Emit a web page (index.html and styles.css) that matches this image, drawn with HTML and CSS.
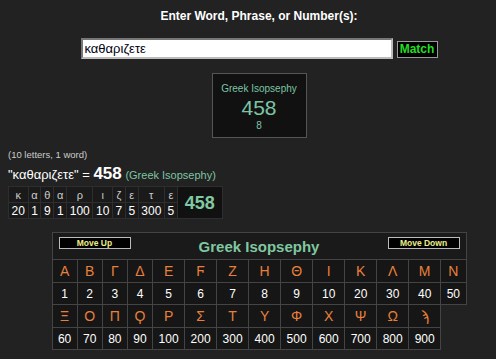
FILE: index.html
```html
<!DOCTYPE html>
<html lang="en">
<head>
    <meta charset="UTF-8">
    <meta name="viewport" content="width=device-width, initial-scale=1.0">
    <title>Gematria Calculator</title>
    <link rel="stylesheet" href="styles.css">
</head>
<body>
    <div class="top">
        <div class="prompt">Enter Word, Phrase, or Number(s):</div>
        <form class="search">
            <input class="word" type="text" value="καθαριζετε">
            <button class="match" type="button">Match</button>
        </form>
        <div class="summary">
            <div class="summary-name">Greek Isopsephy</div>
            <div class="summary-total">458</div>
            <div class="summary-sub">8</div>
        </div>
    </div>

    <div class="result">
        <div class="count">(10 letters, 1 word)</div>
        <div class="equation">"καθαριζετε" = <b>458</b> <span class="cipher">(Greek Isopsephy)</span></div>
        <table class="breakdown">
            <tr class="chars">
                <td>κ</td><td>α</td><td>θ</td><td>α</td><td>ρ</td><td>ι</td><td>ζ</td><td>ε</td><td>τ</td><td>ε</td>
                <td class="sum" rowspan="2">458</td>
            </tr>
            <tr class="nums">
                <td>20</td><td>1</td><td>9</td><td>1</td><td>100</td><td>10</td><td>7</td><td>5</td><td>300</td><td>5</td>
            </tr>
        </table>
    </div>

    <div class="chart-wrap">
        <table class="chart">
            <tr>
                <th colspan="14">
                    <div class="chart-head">
                        <button class="shift" type="button">Move Up</button>
                        <span class="chart-title">Greek Isopsephy</span>
                        <button class="shift" type="button">Move Down</button>
                    </div>
                </th>
            </tr>
            <tr class="letters">
                <td>Α</td><td>Β</td><td>Γ</td><td>Δ</td><td>Ε</td><td>Ϝ</td><td>Ζ</td><td>Η</td><td>Θ</td><td>Ι</td><td>Κ</td><td>Λ</td><td>Μ</td><td>Ν</td>
            </tr>
            <tr class="values">
                <td>1</td><td>2</td><td>3</td><td>4</td><td>5</td><td>6</td><td>7</td><td>8</td><td>9</td><td>10</td><td>20</td><td>30</td><td>40</td><td>50</td>
            </tr>
            <tr class="letters">
                <td>Ξ</td><td>Ο</td><td>Π</td><td>Ϙ</td><td>Ρ</td><td>Σ</td><td>Τ</td><td>Υ</td><td>Φ</td><td>Χ</td><td>Ψ</td><td>Ω</td><td>ϡ</td>
            </tr>
            <tr class="values">
                <td>60</td><td>70</td><td>80</td><td>90</td><td>100</td><td>200</td><td>300</td><td>400</td><td>500</td><td>600</td><td>700</td><td>800</td><td>900</td>
            </tr>
        </table>
    </div>
</body>
</html>
```

FILE: styles.css
```css
/* Page */
body {
    background-color: #222;
    color: #fff;
    font-family: "Liberation Sans", Arial, sans-serif;
    margin: 0;
}

/* Top block, centred a little right of the window */
.top {
    padding: 9px 0 0 22px;
    text-align: center;
}

.prompt {
    font-size: 12px;
    line-height: 14px;
    font-weight: bold;
}

.search {
    display: flex;
    justify-content: center;
    align-items: center;
    gap: 4px;
    margin: 15px 0 0;
}

.word {
    box-sizing: border-box;
    width: 312px;
    height: 21px;
    margin: 0;
    padding: 0 2px;
    border: 2px solid #777;
    border-right-color: #bbb;
    border-bottom-color: #bbb;
    background: #fff;
    color: #001;
    font-family: "Liberation Sans", Arial, sans-serif;
    font-size: 13px;
}

.match {
    box-sizing: border-box;
    width: 41px;
    height: 17px;
    margin: 1px 0 0;
    padding: 0;
    border: 1px solid #999;
    background: #000;
    color: #22dd22;
    font-family: "Liberation Sans", Arial, sans-serif;
    font-size: 12px;
    font-weight: bold;
}

.summary {
    box-sizing: border-box;
    width: 95px;
    height: 65px;
    margin: 14px auto 0;
    padding-top: 9px;
    border: 1px solid #555;
    background: #111;
    color: #7cc4a4;
}

.summary-name {
    font-size: 10px;
    line-height: 12px;
}

.summary-total {
    margin-top: 2px;
    font-size: 21px;
    line-height: 22px;
}

.summary-sub {
    margin-top: 1px;
    font-size: 10px;
    line-height: 12px;
}

/* Word result, left aligned */
.result {
    padding-left: 8px;
}

.count {
    margin-top: 11px;
    font-size: 9.5px;
    line-height: 11px;
    color: #ccc;
}

.equation {
    margin-top: 6px;
    font-size: 13px;
    line-height: 16px;
}

.equation b {
    font-size: 17px;
}

.cipher {
    font-size: 11px;
    color: #7cc4a4;
}

.breakdown {
    border-collapse: collapse;
    margin-top: 3px;
    font-size: 12px;
}

.breakdown td {
    height: 15px;
    padding: 0 2.6px;
    border: 1px solid #2e2e2e;
    background: #1a1a1a;
    text-align: center;
    line-height: 14px;
}

.breakdown .chars td {
    color: #ccc;
    font-size: 11px;
}

.breakdown .chars .sum {
    padding: 0 7px;
    background: #111;
    color: #80c8a0;
    font-size: 18px;
    font-weight: bold;
}

/* Cipher chart */
.chart-wrap {
    padding-left: 22px;
    margin-top: 13px;
}

.chart {
    width: 415px;
    border-collapse: collapse;
    margin: 0 auto;
}

.chart th {
    padding: 0;
    border: 1px solid #444;
    background: #1a1a1a;
}

.chart-head {
    display: flex;
    align-items: flex-start;
    height: 26px;
    padding: 4px 6px 0;
    box-sizing: border-box;
}

.chart-title {
    flex: 1;
    margin-top: 1px;
    color: #80c8a0;
    font-size: 15px;
    line-height: 18px;
    font-weight: bold;
}

.shift {
    box-sizing: border-box;
    width: 72px;
    height: 12px;
    margin: 0;
    padding: 0;
    border: 1px solid #bbb;
    background: #000;
    color: #eeee88;
    font-family: "Liberation Sans", Arial, sans-serif;
    font-size: 8.5px;
    font-weight: bold;
    line-height: 10px;
}

.chart td {
    padding: 0 5px;
    border: 1px solid #444;
    background: #161616;
    text-align: center;
}

.letters td {
    height: 22px;
    color: #e8803c;
    font-size: 14px;
    font-family: "Liberation Sans", "DejaVu Sans", sans-serif;
}

.values td {
    height: 21px;
    color: #fff;
    font-size: 12px;
}
```
